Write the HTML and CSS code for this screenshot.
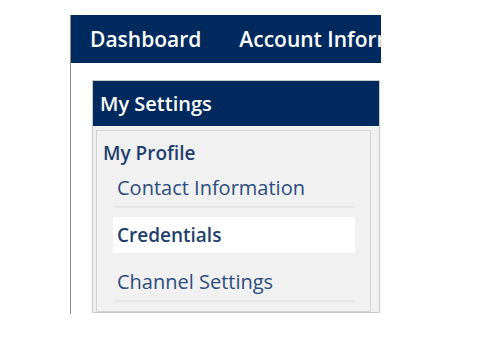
FILE: index.html
```html
<!DOCTYPE html>
<html>
<head>
<meta charset="utf-8">
<link rel="stylesheet" href="styles.css">
</head>
<body>
<div class="page">
  <nav class="nav">
    <span class="nav-item">Dashboard</span>
    <span class="nav-item">Account Information</span>
  </nav>
  <div class="panel">
    <div class="panel-header">My Settings</div>
    <div class="panel-body">
      <div class="inner">
        <div class="group-title">My Profile</div>
        <ul class="menu">
          <li class="menu-item">Contact Information</li>
          <li class="menu-item active">Credentials</li>
          <li class="menu-item">Channel Settings</li>
        </ul>
      </div>
    </div>
  </div>
</div>
</body>
</html>
```
FILE: styles.css
```css
html, body {
  margin: 0;
  padding: 0;
  background: #ffffff;
  font-family: "Open Sans", "Noto Sans", sans-serif;
}

.page {
  margin: 15px 0 0 70px;
  width: 310px;
  height: 299px;
  border-left: 1px solid #8a8a8a;
  overflow: hidden;
}

.nav {
  background: #002a5e;
  height: 48px;
  display: flex;
  align-items: center;
  gap: 38px;
  padding-left: 19px;
  white-space: nowrap;
  overflow: hidden;
}

.nav-item {
  color: #ffffff;
  font-size: 21px;
  font-weight: 600;
  flex-shrink: 0;
}

.panel {
  margin: 17px 0 0 21px;
  width: 286px;
  border: 1px solid #c8c8c8;
  background: #f1f1f1;
}

.panel-header {
  background: #002a5e;
  color: #ffffff;
  height: 45px;
  line-height: 45px;
  padding-left: 7px;
  font-size: 20px;
  font-weight: 600;
}

.panel-body {
  padding: 4px 8px 0 3px;
}

.inner {
  border: 1px solid #d4d4d4;
  padding: 10px 0 0 6px;
}

.group-title {
  color: #1e3f6e;
  font-size: 19px;
  font-weight: 600;
  line-height: 24px;
}

.menu {
  list-style: none;
  margin: 5px 0 0 10px;
  padding: 0;
  width: 242px;
}

.menu-item {
  color: #2c4d7e;
  font-size: 20px;
  height: 36px;
  line-height: 36px;
  padding-left: 4px;
  border-bottom: 2px solid #e6e6e6;
  margin-bottom: 9px;
  white-space: nowrap;
}

.menu-item.active {
  background: #ffffff;
  background-clip: padding-box;
  border-bottom-color: transparent;
  color: #1e3f6e;
  font-size: 19px;
  font-weight: 600;
}
```
